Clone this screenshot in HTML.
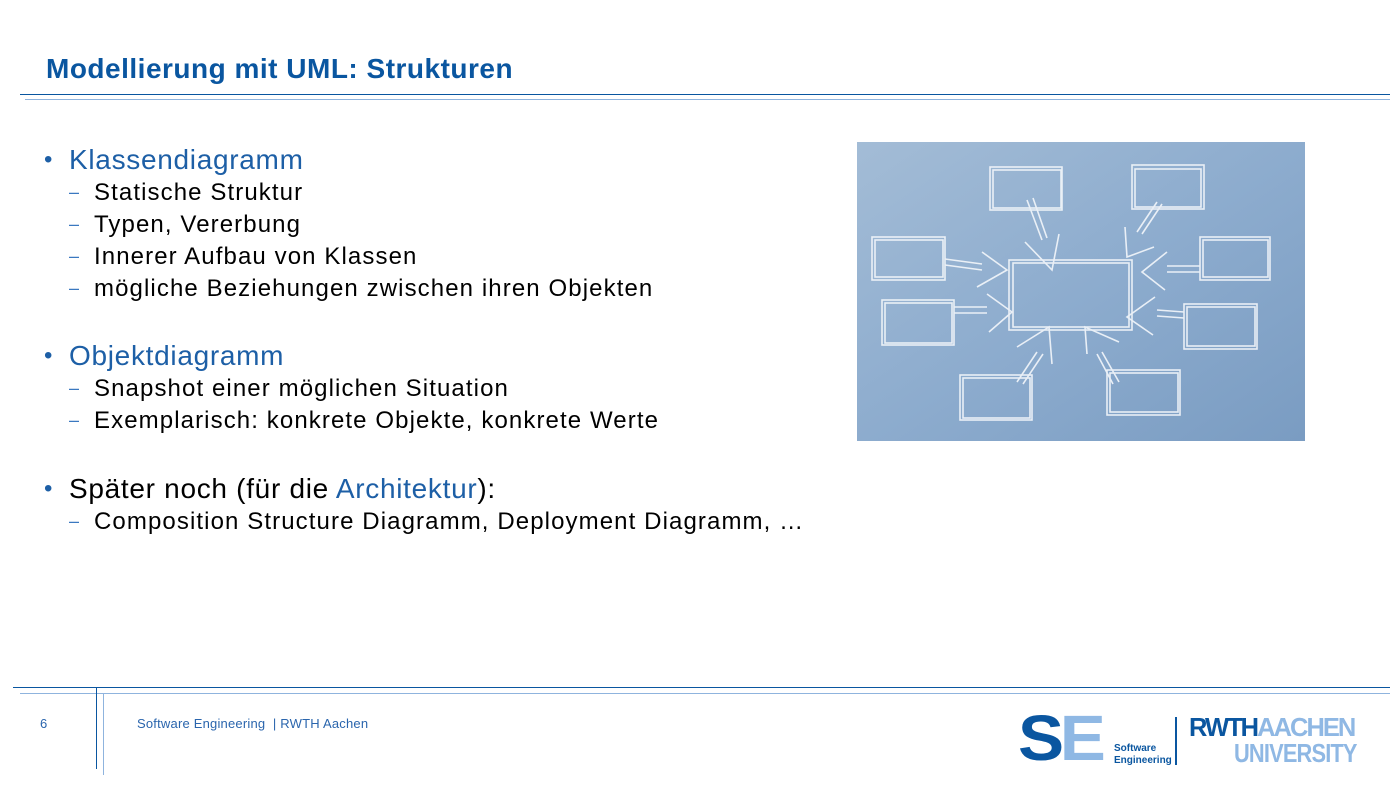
<!DOCTYPE html>
<html><head><meta charset="utf-8"><style>
body{margin:0;width:1400px;height:788px;background:#fff;position:relative;overflow:hidden;font-family:"Liberation Sans",Arial,sans-serif}
.a{position:absolute;white-space:nowrap}
.h{left:46px;top:53px;font-size:28px;letter-spacing:0.5px;font-weight:bold;color:#0a56a0}
.l{position:absolute;height:1px}
.b1{font-size:28px;letter-spacing:0.7px;color:#1d5fa6;line-height:30px}
.b1 .d{color:#1d5fa6;position:absolute;left:-25px;font-size:24px}
.s{font-size:24px;letter-spacing:1.1px;color:#000;line-height:28px}
.s .d{color:#3a78c0;position:absolute;left:-25px;font-size:18px;top:-1px}
.blk{color:#000}
</style></head><body>
<div class="a h">Modellierung mit UML: Strukturen</div>
<div class="l" style="left:20px;top:94px;width:1370px;background:#0a56a0"></div>
<div class="l" style="left:25px;top:99px;width:1365px;background:#8fb4de"></div>

<div class="a b1" style="left:69px;top:145px"><span class="d">•</span>Klassendiagramm</div>
<div class="a s" style="left:94px;top:179px"><span class="d">–</span>Statische Struktur</div>
<div class="a s" style="left:94px;top:211px"><span class="d">–</span>Typen, Vererbung</div>
<div class="a s" style="left:94px;top:243px"><span class="d">–</span>Innerer Aufbau von Klassen</div>
<div class="a s" style="left:94px;top:275px"><span class="d">–</span>mögliche Beziehungen zwischen ihren Objekten</div>
<div class="a b1" style="left:69px;top:341px"><span class="d">•</span>Objektdiagramm</div>
<div class="a s" style="left:94px;top:375px"><span class="d">–</span>Snapshot einer möglichen Situation</div>
<div class="a s" style="left:94px;top:407px"><span class="d">–</span>Exemplarisch: konkrete Objekte, konkrete Werte</div>
<div class="a b1" style="left:69px;top:474px"><span class="d">•</span><span class="blk">Später noch (für die </span>Architektur<span class="blk">):</span></div>
<div class="a s" style="left:94px;top:508px"><span class="d">–</span>Composition Structure Diagramm, Deployment Diagramm, …</div>

<svg class="a" style="left:857px;top:142px" width="448" height="299" viewBox="0 0 448 299">
<defs><linearGradient id="g" x1="0" y1="0" x2="1" y2="1"><stop offset="0" stop-color="#a3bcd6"/><stop offset=".5" stop-color="#8dacce"/><stop offset="1" stop-color="#7a9cc2"/></linearGradient></defs>
<rect width="448" height="299" fill="url(#g)"/>
<g fill="none" stroke="#f4f7fb" stroke-width="1.6" opacity=".9">
<rect x="133" y="25" width="72" height="43"/><rect x="136" y="28" width="68" height="38"/>
<rect x="275" y="23" width="72" height="44"/><rect x="278" y="27" width="66" height="38"/>
<rect x="15" y="95" width="73" height="43"/><rect x="18" y="98" width="68" height="37"/>
<rect x="343" y="95" width="70" height="43"/><rect x="346" y="98" width="65" height="37"/>
<rect x="152" y="118" width="123" height="70"/><rect x="156" y="121" width="116" height="64"/>
<rect x="25" y="158" width="72" height="45"/><rect x="28" y="161" width="67" height="40"/>
<rect x="327" y="162" width="73" height="45"/><rect x="330" y="165" width="68" height="39"/>
<rect x="103" y="233" width="72" height="45"/><rect x="106" y="236" width="67" height="40"/>
<rect x="250" y="228" width="73" height="45"/><rect x="253" y="231" width="68" height="39"/>
<path d="M170 58 L185 98 M176 56 L190 96 M168 100 L195 128 L202 92 M300 60 L280 90 M305 62 L285 92 M268 85 L270 115 L297 105 M88 117 L125 122 M88 123 L125 128 M125 110 L150 128 L120 145 M343 124 L310 124 M343 130 L310 130 M310 110 L285 130 L308 148 M97 165 L130 165 M97 171 L130 171 M130 152 L155 170 L132 190 M327 170 L300 168 M327 176 L300 174 M298 155 L270 175 L296 193 M160 240 L180 210 M166 242 L186 212 M160 205 L192 185 L195 222 M262 240 L245 210 M256 242 L240 212 M230 212 L228 185 L262 200"/>
</g>
</svg>

<div class="l" style="left:13px;top:687px;width:1377px;background:#0a56a0"></div>
<div class="l" style="left:20px;top:693px;width:1370px;background:#8fb4de"></div>
<div class="a" style="left:96px;top:687px;width:1px;height:82px;background:#0a56a0"></div>
<div class="a" style="left:103px;top:693px;width:1px;height:82px;background:#8fb4de"></div>
<div class="a" style="left:40px;top:716px;font-size:13px;color:#2a65ad">6</div>
<div class="a" style="left:137px;top:716px;font-size:13px;letter-spacing:0.2px;color:#2a65ad">Software Engineering &nbsp;| RWTH Aachen</div>

<div class="a" style="left:1018px;top:706px;font-size:64px;font-weight:bold;letter-spacing:-4px;line-height:64px;transform:scaleX(1.08);transform-origin:left"><span style="color:#0a56a0">S</span><span style="color:#8fb8e4">E</span></div>
<div class="a" style="left:1114px;top:743px;font-size:10px;font-weight:bold;color:#0a56a0;line-height:12px">Software<br>Engineering</div>
<div class="a" style="left:1175px;top:717px;width:2px;height:48px;background:#0a56a0"></div>
<div class="a" style="left:1189px;top:714px;font-size:26px;font-weight:bold;line-height:26px;letter-spacing:-2px;transform:scaleX(0.98);transform-origin:left"><span style="color:#0a56a0">RWTH</span><span style="color:#8fb8e4">AACHEN</span></div>
<div class="a" style="left:1234px;top:740px;font-size:26px;font-weight:bold;line-height:26px;color:#8fb8e4;letter-spacing:-1px;transform:scaleX(0.84);transform-origin:left">UNIVERSITY</div>
</body></html>
